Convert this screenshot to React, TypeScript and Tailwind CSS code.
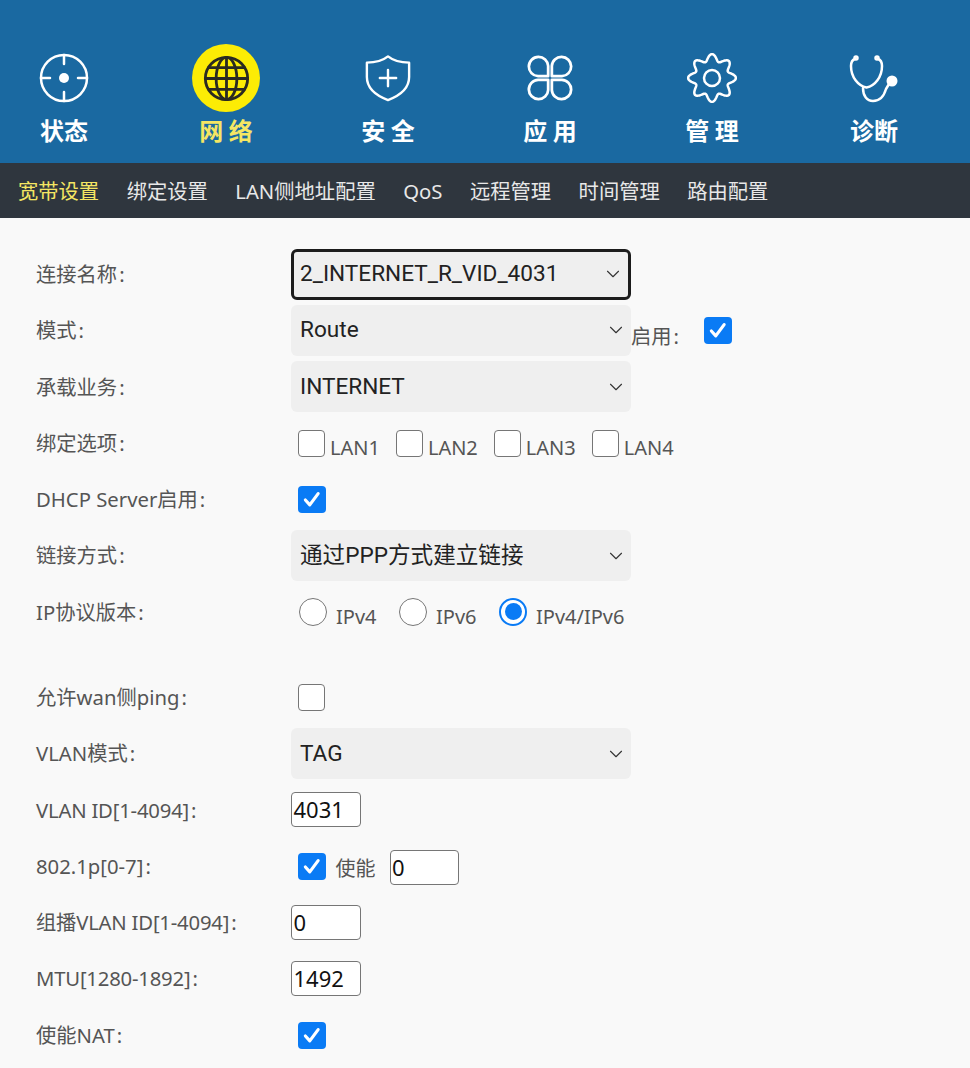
import { ChevronDown } from 'lucide-react';
import type { ReactNode } from 'react';

const FONT = "font-['Noto_Sans','Noto_Sans_CJK_SC',sans-serif]";

// eight soft lobes, same outline as the reference gear
function gearPath() {
  const pts: string[] = [];
  for (let i = 0; i < 240; i++) {
    const t = (i / 240) * Math.PI * 2;
    const r = 20.5 + 3.4 * Math.cos(8 * t);
    const a = t - Math.PI / 2;
    pts.push(`${i === 0 ? 'M' : 'L'}${(25 + r * Math.cos(a)).toFixed(2)} ${(25 + r * Math.sin(a)).toFixed(2)}`);
  }
  return pts.join(' ') + 'Z';
}

const stroke = {
  fill: 'none',
  stroke: 'currentColor',
  strokeWidth: 2.5,
  strokeLinecap: 'round' as const,
  strokeLinejoin: 'round' as const,
};

function TargetIcon() {
  return (
    <svg viewBox="0 0 50 50" className="w-[50px] h-[50px] text-white" {...stroke}>
      <circle cx="25" cy="25" r="23" />
      <path d="M25 2v9M25 39v9M2 25h9M39 25h9" />
      <circle cx="25" cy="25" r="5" fill="currentColor" stroke="none" />
    </svg>
  );
}

function GlobeIcon() {
  return (
    <div className="w-[68px] h-[68px] rounded-full bg-[#fcec05] flex items-center justify-center text-[#2a2a22]">
      <svg viewBox="0 0 50 50" className="w-[47px] h-[47px]" {...stroke} strokeWidth={3}>
        <circle cx="25" cy="25" r="22.5" />
        <ellipse cx="25" cy="25" rx="11" ry="22.5" />
        <path d="M25 2.500v45M2.500 25h45M6 13.500h38M6 36.500h38" />
      </svg>
    </div>
  );
}

function ShieldIcon() {
  return (
    <svg viewBox="0 0 50 50" className="w-[48px] h-[48px] text-white" {...stroke}>
      <path d="M25 2.500C30 6.500 37 9 47 9v15C47 36 37 43.500 25 48 13 43.500 3 36 3 24V9c10 0 17-2.500 22-6.500Z" />
      <path d="M25 16.500v17M16.500 25h17" />
    </svg>
  );
}

function PetalsIcon() {
  return (
    <svg viewBox="0 0 50 50" className="w-[46px] h-[46px] text-white" {...stroke} strokeWidth={3}>
      <path d="M23 23H12A10.500 10.500 0 1 1 23 12Z" />
      <path d="M27 23h11A10.500 10.500 0 1 0 27 12Z" />
      <path d="M23 27H12A10.500 10.500 0 1 0 23 38Z" />
      <path d="M27 27h11A10.500 10.500 0 1 1 27 38Z" />
    </svg>
  );
}

function GearIcon() {
  return (
    <svg viewBox="0 0 50 50" className="w-[50px] h-[50px] text-white" {...stroke}>
      <path d={gearPath()} />
      <circle cx="25" cy="25" r="8" />
    </svg>
  );
}

function StethoscopeIcon() {
  return (
    <svg viewBox="0 0 50 52" className="w-[50px] h-[52px] text-white" {...stroke}>
      <path d="M6 7C3 8 2 10 2 14c0 11 7 20 15.500 21.500C26 34 33 25 33 14c0-4-1-6-4-7" />
      <circle cx="7" cy="6" r="1.500" />
      <circle cx="28" cy="6" r="1.500" />
      <path d="M14 36c0 8 4 13 10 13 7 0 11-5 13-12l3-5" />
      <circle cx="43" cy="29" r="5.500" fill="currentColor" stroke="none" />
    </svg>
  );
}

const navItems = [
  { label: '状态', icon: <TargetIcon /> },
  { label: '网 络', icon: <GlobeIcon />, active: true },
  { label: '安 全', icon: <ShieldIcon /> },
  { label: '应 用', icon: <PetalsIcon /> },
  { label: '管 理', icon: <GearIcon /> },
  { label: '诊断', icon: <StethoscopeIcon /> },
];

const subItems = ['宽带设置', '绑定设置', 'LAN侧地址配置', 'QoS', '远程管理', '时间管理', '路由配置'];

function Row({ label, tight, children }: { label: string; tight?: boolean; children: ReactNode }) {
  return (
    <div className="flex items-center h-[56.3px]">
      <div className={`w-[255px] shrink-0 text-[20.3px] text-[#555] ${tight ? 'tracking-[-0.2px]' : ''}`}>
        {label}
        <span className="ml-[2px]">:</span>
      </div>
      {children}
    </div>
  );
}

function Select({ value, focused }: { value: string; focused?: boolean }) {
  return (
    <div
      className={`relative w-[340px] h-[51px] shrink-0 rounded-[6px] bg-[#efefef] flex items-center text-[22.6px] text-[#222] font-['Roboto','Noto_Sans_CJK_SC',sans-serif] ${
        focused ? 'border-[3px] border-[#1c1c1c] pl-[6px]' : 'pl-[9px]'
      }`}
    >
      <span>{value}</span>
      <ChevronDown className="absolute right-[4px] top-1/2 -translate-y-1/2 w-[22px] h-[22px] text-[#333]" strokeWidth={1.2} />
    </div>
  );
}

function Checkbox({ checked }: { checked?: boolean }) {
  return checked ? (
    <span className="w-[27.5px] h-[27px] shrink-0 rounded-[4px] bg-[#0a7bf5] flex items-center justify-center">
      <svg viewBox="0 0 28 27" className="w-[28px] h-[27px]" fill="none" stroke="#fff" strokeWidth="3.2" strokeLinecap="round" strokeLinejoin="round">
        <path d="M7.500 14l4.500 5 8.500-11.500" />
      </svg>
    </span>
  ) : (
    <span className="w-[27px] h-[27px] shrink-0 rounded-[4px] border-[1.5px] border-[#767676] bg-white" />
  );
}

function Radio({ checked }: { checked?: boolean }) {
  return (
    <span
      className={`w-[28px] h-[28px] shrink-0 rounded-full bg-white flex items-center justify-center ${
        checked ? 'border-[2.5px] border-[#0a7bf5]' : 'border-[1.5px] border-[#767676]'
      }`}
    >
      {checked && <span className="w-[17px] h-[17px] rounded-full bg-[#0a7bf5]" />}
    </span>
  );
}

function TextBox({ value, className = '' }: { value: string; className?: string }) {
  return (
    <div className={`w-[69.5px] h-[35px] shrink-0 rounded-[4px] border-[1.5px] border-[#767676] bg-white flex items-center pl-[1.5px] text-[22px] text-[#111] ${className}`}>
      {value}
    </div>
  );
}

export default function App() {
  return (
    <div className={`h-[1068px] overflow-hidden bg-[#f9f9f9] ${FONT}`}>
      <div className="h-[163px] bg-[#1a69a1] flex items-start justify-between pl-[14px] pr-[46px] pt-[44px]">
        {navItems.map((item) => (
          <div key={item.label} className="w-[100px] flex flex-col items-center">
            <div className="h-[68px] flex items-center justify-center">{item.icon}</div>
            <div className={`text-[24px] leading-[36px] font-bold font-['Noto_Sans_CJK_SC',sans-serif] ${item.active ? 'text-[#f5e663]' : 'text-white'}`}>
              {item.label}
            </div>
          </div>
        ))}
      </div>

      <div className="h-[55px] bg-[#2f363e] flex items-center pl-[18px] gap-[27.5px] text-[20.3px] text-[#e8e8e8]">
        {subItems.map((item, i) => (
          <span key={item} className={i === 0 ? 'text-[#f5e663] translate-y-[1px]' : 'translate-y-[1px]'}>
            {item}
          </span>
        ))}
      </div>

      <div className="pl-[36px] pt-[28px]">
        <Row label="连接名称">
          <Select value="2_INTERNET_R_VID_4031" focused />
        </Row>
        <Row label="模式">
          <Select value="Route" />
          <span className="w-[73px] text-[20.3px] text-[#555] translate-y-[6px]">
            启用<span className="ml-[2px]">:</span>
          </span>
          <Checkbox checked />
        </Row>
        <Row label="承载业务">
          <Select value="INTERNET" />
        </Row>
        <Row label="绑定选项">
          <div className="flex pl-[7px] gap-[16px]">
            {['LAN1', 'LAN2', 'LAN3', 'LAN4'].map((lan) => (
              <div key={lan} className="flex items-center gap-[5px] text-[20px] text-[#555]">
                <Checkbox />
                <span className="translate-y-[5px]">{lan}</span>
              </div>
            ))}
          </div>
        </Row>
        <Row label="DHCP Server启用">
          <div className="pl-[7px] flex">
            <Checkbox checked />
          </div>
        </Row>
        <Row label="链接方式">
          <Select value="通过PPP方式建立链接" />
        </Row>
        <Row label="IP协议版本">
          <div className="flex items-center pl-[8px] text-[20px] text-[#555]">
            <Radio />
            <span className="ml-[9px] w-[63px] translate-y-[5px]">IPv4</span>
            <Radio />
            <span className="ml-[9px] w-[63px] translate-y-[5px]">IPv6</span>
            <Radio checked />
            <span className="ml-[9px] translate-y-[5px]">IPv4/IPv6</span>
          </div>
        </Row>
        <div className="h-[29px]" />
        <Row label="允许wan侧ping">
          <div className="pl-[7px] flex">
            <Checkbox />
          </div>
        </Row>
        <Row label="VLAN模式">
          <Select value="TAG" />
        </Row>
        <Row label="VLAN ID[1-4094]" tight>
          <TextBox value="4031" />
        </Row>
        <Row label="802.1p[0-7]">
          <div className="flex items-center pl-[7px]">
            <Checkbox checked />
            <span className="ml-[10px] w-[54px] text-[20px] text-[#555] translate-y-[3px]">使能</span>
            <TextBox value="0" className="translate-y-[1px]" />
          </div>
        </Row>
        <Row label="组播VLAN ID[1-4094]" tight>
          <TextBox value="0" />
        </Row>
        <Row label="MTU[1280-1892]" tight>
          <TextBox value="1492" />
        </Row>
        <Row label="使能NAT">
          <div className="pl-[7px] flex">
            <Checkbox checked />
          </div>
        </Row>
      </div>
    </div>
  );
}
